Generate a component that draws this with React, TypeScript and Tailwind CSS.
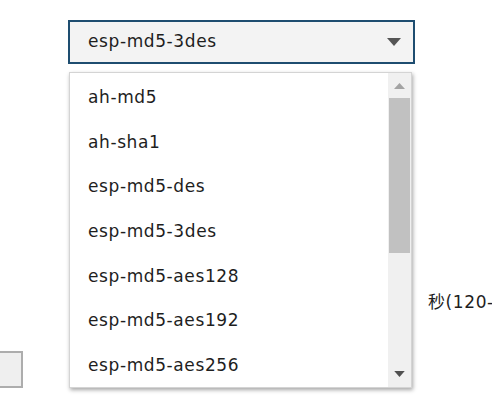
const options = [
  'ah-md5',
  'ah-sha1',
  'esp-md5-des',
  'esp-md5-3des',
  'esp-md5-aes128',
  'esp-md5-aes192',
  'esp-md5-aes256',
];

function CaretDown({ className }: { className?: string }) {
  return (
    <svg viewBox="0 0 14 8" className={className} fill="currentColor">
      <polygon points="0,0 14,0 7,8" />
    </svg>
  );
}

function CaretUp({ className }: { className?: string }) {
  return (
    <svg viewBox="0 0 11 6" className={className} fill="currentColor">
      <polygon points="0,6 11,6 5.5,0" />
    </svg>
  );
}

export default function App() {
  return (
    <div className="relative w-[492px] h-[411px] overflow-hidden bg-white text-[17px] tracking-[0.6px] text-[#1e1e1e] font-['DejaVu_Sans','Noto_Sans_CJK_SC',sans-serif]">
      {/* select */}
      <div className="pt-[20px] pl-[68px]">
        <div className="w-[347px] h-[44px] border-2 border-[#1e4d70] bg-[#f3f3f3] flex items-center justify-between pl-[18px] pr-[12px]">
          <span>esp-md5-3des</span>
          <CaretDown className="w-[14px] h-[8px] text-[#555]" />
        </div>
      </div>

      {/* form content under the open list */}
      <div className="pt-[228px] pl-[428px] leading-[20px] whitespace-nowrap">秒(120-</div>
      <div className="mt-[39px] w-[23px] h-[37px] border-2 border-l-0 border-[#adadad] bg-[#efefef]" />

      {/* open list */}
      <div className="absolute left-[69px] top-[72px] w-[343px] h-[316px] flex bg-white border border-[#d4d4d4] shadow-[1px_2px_4px_rgba(0,0,0,0.35)]">
        <div className="flex-1 overflow-hidden pt-[2px]">
          {options.map((o) => (
            <div key={o} className="h-[44.67px] leading-[44.67px] pl-[18px]">
              {o}
            </div>
          ))}
        </div>
        <div className="w-[23px] bg-[#f0f0f0] flex flex-col">
          <div className="h-[25px] flex items-center justify-center">
            <CaretUp className="w-[11px] h-[6px] text-[#a3a3a3]" />
          </div>
          <div className="h-[155px] mx-[1px] bg-[#c1c1c1]" />
          <div className="flex-1" />
          <div className="h-[26px] flex items-center justify-center">
            <CaretDown className="w-[11px] h-[6px] text-[#505050]" />
          </div>
        </div>
      </div>
    </div>
  );
}
